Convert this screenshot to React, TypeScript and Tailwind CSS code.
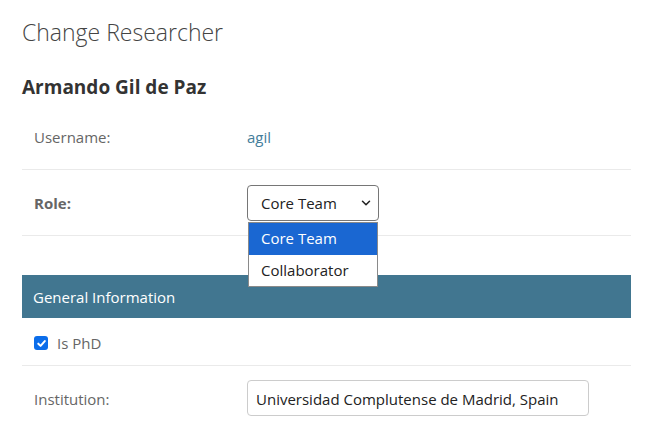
import { ChevronDown } from "lucide-react";

function Row({
  label,
  bold,
  children,
  className = "h-[66px] border-b border-[#eaeaea]",
}: {
  label?: string;
  bold?: boolean;
  children?: React.ReactNode;
  className?: string;
}) {
  return (
    <div className={`flex items-center ${className}`}>
      <div className={`w-[225px] pl-3 pt-[2px] text-[15px] text-[#666] ${bold ? "font-bold" : ""}`}>
        {label}
      </div>
      <div className="flex-1">{children}</div>
    </div>
  );
}

export default function App() {
  return (
    <div className="w-[650px] h-[437px] overflow-hidden bg-white font-['Open_Sans',sans-serif] text-[#333]">
      <div className="pl-[22px] pr-[19px]">
        <h1 className="pt-[16px] text-[23px] leading-[32px] font-light text-[#444]">
          Change Researcher
        </h1>
        <h2 className="mt-[27px] text-[19px] leading-[24px] font-bold text-[#333]">
          Armando Gil de Paz
        </h2>

        <div className="mt-[5px]">
          <Row label="Username:">
            <span className="text-[15px] text-[#447e9b]">agil</span>
          </Row>
          <Row label="Role:" bold>
            <div className="relative w-[132px]">
              <div className="flex h-[36px] items-center justify-between rounded-[4px] border border-[#767676] pl-[13px] pr-[5px] text-[15px] text-[#222]">
                <span className="pt-[2px]">Core Team</span>
                <ChevronDown className="h-[14px] w-[14px]" strokeWidth={2.6} />
              </div>
              <div className="absolute left-[1px] top-[37px] z-10 w-[130px] border border-[#8a8a8a] bg-white text-[15px] text-[#222]">
                <div className="flex h-[32px] items-center bg-[#1a67d2] pl-[12px] text-white">
                  Core Team
                </div>
                <div className="flex h-[31px] items-center pl-[12px]">Collaborator</div>
              </div>
            </div>
          </Row>
        </div>

        <div className="mt-[39px] flex h-[43px] items-center bg-[#417690] pl-[11px] pt-[2px] text-[15px] text-white">
          General Information
        </div>

        <div className="flex h-[48px] items-center gap-[9px] border-b border-[#eaeaea] pl-3 pt-[3px] text-[15px] text-[#666]">
          <span className="flex h-[14px] w-[14px] items-center justify-center rounded-[3px] bg-[#0b6dea]">
            <svg viewBox="0 0 12 12" className="h-[11px] w-[11px]" fill="none" stroke="white" strokeWidth={2.2} strokeLinecap="round" strokeLinejoin="round">
              <path d="M2.5 6.2 5 8.6 9.6 3.4" />
            </svg>
          </span>
          <span className="pt-[1px]">Is PhD</span>
        </div>

        <Row label="Institution:" className="h-[64px]">
          <div className="flex h-[36px] w-[342px] items-center rounded-[4px] border border-[#cccccc] pl-[8px] pt-[2px] text-[15px] text-[#222]">
            Universidad Complutense de Madrid, Spain
          </div>
        </Row>
      </div>
    </div>
  );
}
